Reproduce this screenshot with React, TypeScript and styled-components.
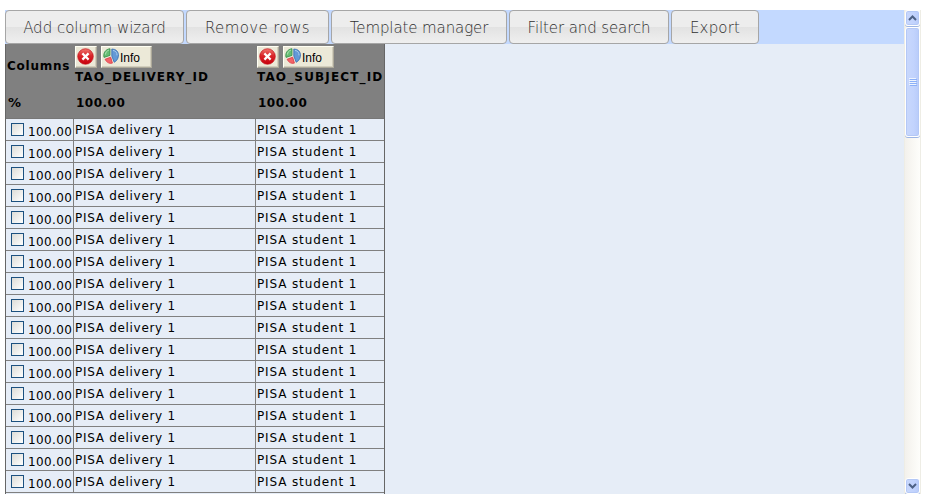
import React from "react";
import styled, { createGlobalStyle } from "styled-components";

const Global = createGlobalStyle`
  * { box-sizing: border-box; }
  body { margin: 0; background: #fff; overflow: hidden; color: #000; font-family: "DejaVu Sans", Verdana, sans-serif; }
`;

const Panel = styled.div`
  display: flex;
  width: 916px;
  height: 484px;
  margin: 10px 0 0 5px;
  overflow: hidden;
`;

const Content = styled.main`
  width: 899px;
  height: 484px;
  background: #e6edf7;
  overflow: hidden;
`;

const Toolbar = styled.nav`
  display: flex;
  gap: 2px;
  height: 34px;
  background: #c3d9ff;
`;

const ToolButton = styled.button<{ $width: number; $spacing: number }>`
  flex: none;
  width: ${(p) => p.$width}px;
  height: 34px;
  padding: 1px 0 0;
  border: 1px solid #a6a6a6;
  border-radius: 4px;
  background: linear-gradient(#ededed 0 50%, #e2e2e2 50%, #f0f0f0 100%) border-box;
  color: #303030;
  font: 200 15px "DejaVu Sans", Verdana, sans-serif;
  letter-spacing: ${(p) => p.$spacing}px;
  white-space: nowrap;
`;

const Table = styled.div`
  width: 380px;
  height: 450px;
  border-left: 1px solid #666;
  border-right: 1px solid #666;
`;

const HeaderGrid = styled.div`
  display: grid;
  grid-template-columns: 68px 182px 128px;
  height: 75px;
  background: #808080;
  border-bottom: 1px solid #777;
`;

const HeaderCell = styled.div<{ $first?: boolean }>`
  display: flex;
  flex-direction: column;
  padding: ${(p) => (p.$first ? "14px 0 0 1px" : "2px 0 0 1px")};
  font-size: 12px;
  font-weight: bold;
  white-space: nowrap;
`;

const HeaderText = styled.span<{ $spacing: number }>`
  height: 16px;
  line-height: 16px;
  letter-spacing: ${(p) => p.$spacing}px;
`;

const Percent = styled(HeaderText)<{ $top: number; $size?: number }>`
  margin-top: ${(p) => p.$top}px;
  padding-left: 1px;
  font-size: ${(p) => p.$size ?? 12}px;
`;

const Actions = styled.div`
  display: flex;
  gap: 4px;
  height: 22px;
  margin-bottom: 1px;
`;

const SmallButton = styled.button<{ $width: number }>`
  display: flex;
  align-items: center;
  gap: 1px;
  width: ${(p) => p.$width}px;
  height: 22px;
  padding: 0 1px 2px;
  border: 1px solid;
  border-color: #fffff4 #aca899 #aca899 #fffff4;
  box-shadow: inset -1px -1px #d2cebd;
  background: #ece9d8;
  color: #000;
  font: 12px "Liberation Sans", Tahoma, sans-serif;
`;

const ButtonText = styled.span`
  padding-top: 3px;
`;

const Row = styled.div`
  display: grid;
  grid-template-columns: 67px 182px 129px;
  height: 22px;
  border-bottom: 1px solid #808080;
`;

const Cell = styled.div<{ $spacing: number }>`
  height: 21px;
  padding-left: 1px;
  border-left: 1px solid #808080;
  font-size: 12px;
  line-height: 22px;
  letter-spacing: ${(p) => p.$spacing}px;
  white-space: nowrap;
`;

const SelectCell = styled.label`
  display: flex;
  height: 21px;
  padding-left: 5px;
  font-size: 12px;
  line-height: 26px;
  letter-spacing: 0.4px;
  white-space: nowrap;
`;

const Checkbox = styled.input.attrs({ type: "checkbox" })`
  appearance: none;
  flex: none;
  width: 13px;
  height: 13px;
  margin: 4px 4px 0 0;
  border: 1px solid #1c5180;
  background: linear-gradient(135deg, #dcdcd7, #fff);
`;

const ScrollTrack = styled.div`
  display: flex;
  flex-direction: column;
  justify-content: space-between;
  width: 17px;
  height: 484px;
  border: solid #eeede5;
  border-width: 0 1px;
  background: linear-gradient(90deg, #f3f1ec, #fefefb);
`;

const ScrollPart = styled.div<{ $height: number }>`
  display: flex;
  align-items: center;
  justify-content: center;
  width: 15px;
  height: ${(p) => p.$height}px;
  border: 1px solid #fff;
  border-radius: 3px;
  box-shadow: inset 0 0 0 1px #b4c8f6, 0 1px #9db5e4;
  background: linear-gradient(90deg, #c9d8fc, #c2d3fd 60%, #b8cbf9);
`;

const ScrollTop = styled.div`
  display: flex;
  flex-direction: column;
  gap: 1px;
`;

const DeleteIcon = () => (
  <svg width="17" height="17" viewBox="0 0 17 17" aria-hidden="true">
    <defs>
      <linearGradient id="red" x2="0" y2="1">
        <stop stopColor="#f0766f" />
        <stop offset=".45" stopColor="#d9262a" />
        <stop offset="1" stopColor="#c8000d" />
      </linearGradient>
    </defs>
    <circle cx="8.5" cy="8.5" r="7.8" fill="url(#red)" stroke="#c4151c" strokeWidth=".7" />
    <path d="M6.2 6.2l4.6 4.6M10.8 6.2l-4.6 4.6" stroke="#fff" strokeWidth="2.3" strokeLinecap="square" />
  </svg>
);

const PieIcon = () => (
  <svg width="16" height="16" viewBox="0 0 16 16" aria-hidden="true">
    <path d="M7 7.4L1 9.4C-.1 5.4 2.4 1.2 7 .7z" fill="#65bd74" stroke="#37914a" strokeWidth=".8" />
    <path d="M2.5 6.5C2.6 4.2 4 2.8 5.8 2.2" fill="none" stroke="#b4e3b7" />
    <path d="M8.8 1C17 .9 17.5 11 11.2 14.3L8.8 8z" fill="#6499d6" stroke="#356cae" strokeWidth=".8" />
    <path d="M10 2.4c3 .4 4.2 2.6 4 5" fill="none" stroke="#a6caed" />
    <path d="M7.7 9.2l1.7 5.9C6.8 16 3.7 14.7 2.1 11.3z" fill="#f26368" stroke="#da3640" strokeWidth=".8" />
  </svg>
);

const Arrow = ({ down = false }: { down?: boolean }) => (
  <svg width="9" height="6" viewBox="0 0 9 6" aria-hidden="true">
    <path d={down ? "M1 1l3.5 3.5L8 1" : "M1 5l3.5-3.5L8 5"} fill="none" stroke="#4d6185" strokeWidth="2" />
  </svg>
);

const Grip = () => (
  <svg width="8" height="8" viewBox="0 0 8 8" aria-hidden="true">
    <path d="M0 .5h7M0 2.5h7M0 4.5h7M0 6.5h7" stroke="#eef4fe" />
    <path d="M1 1.5h7M1 3.5h7M1 5.5h7M1 7.5h7" stroke="#8cb0f8" />
  </svg>
);

const tools = [
  { label: "Add column wizard", width: 179, spacing: 0 },
  { label: "Remove rows", width: 143, spacing: 0.4 },
  { label: "Template manager", width: 176, spacing: -0.1 },
  { label: "Filter and search", width: 160, spacing: -0.1 },
  { label: "Export", width: 88, spacing: 0.15 },
];

const columns = [
  { name: "TAO_DELIVERY_ID", spacing: 1.05 },
  { name: "TAO_SUBJECT_ID", spacing: 1.15 },
];

const rows = Array.from({ length: 17 }, (_, id) => ({
  id,
  percent: "100.00",
  delivery: "PISA delivery 1",
  subject: "PISA student 1",
}));

export default function App() {
  return (
    <>
      <Global />
      <Panel>
        <Content>
          <Toolbar>
            {tools.map((t) => (
              <ToolButton key={t.label} $width={t.width} $spacing={t.spacing}>{t.label}</ToolButton>
            ))}
          </Toolbar>
          <Table>
            <HeaderGrid>
              <HeaderCell $first>
                <HeaderText $spacing={0.75}>Columns</HeaderText>
                <Percent $spacing={0} $top={21} $size={13}>%</Percent>
              </HeaderCell>
              {columns.map((c) => (
                <HeaderCell key={c.name}>
                  <Actions>
                    <SmallButton $width={22} aria-label="Delete column"><DeleteIcon /></SmallButton>
                    <SmallButton $width={51}><PieIcon /><ButtonText>Info</ButtonText></SmallButton>
                  </Actions>
                  <HeaderText $spacing={c.spacing}>{c.name}</HeaderText>
                  <Percent $spacing={0.5} $top={10}>100.00</Percent>
                </HeaderCell>
              ))}
            </HeaderGrid>
            {rows.map((r) => (
              <Row key={r.id}>
                <SelectCell><Checkbox />{r.percent}</SelectCell>
                <Cell $spacing={0.7}>{r.delivery}</Cell>
                <Cell $spacing={0.87}>{r.subject}</Cell>
              </Row>
            ))}
          </Table>
        </Content>
        <ScrollTrack>
          <ScrollTop>
            <ScrollPart $height={16}><Arrow /></ScrollPart>
            <ScrollPart $height={110}><Grip /></ScrollPart>
          </ScrollTop>
          <ScrollPart $height={16}><Arrow down /></ScrollPart>
        </ScrollTrack>
      </Panel>
    </>
  );
}
